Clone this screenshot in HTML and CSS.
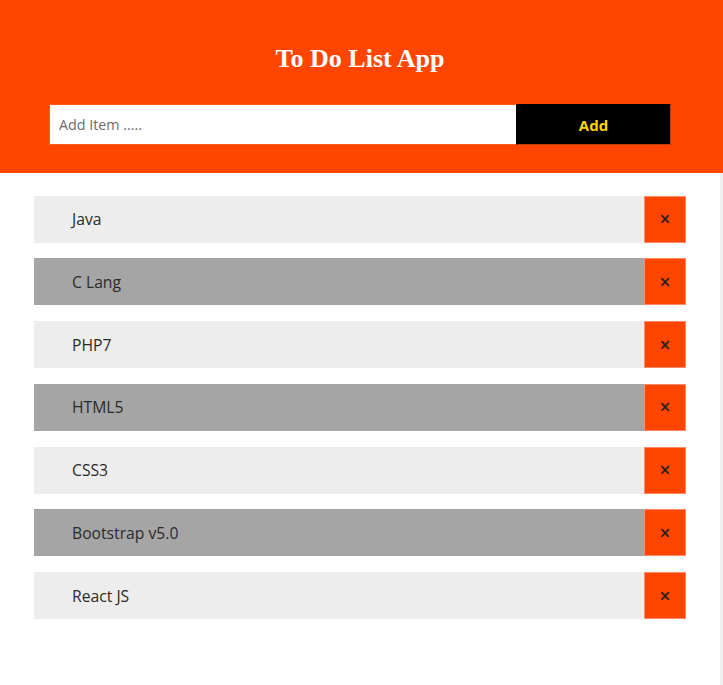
FILE: index.html
```html
<!DOCTYPE html>
<html>
<head>
<meta charset="utf-8">
<link rel="stylesheet" href="styles.css">
</head>
<body>
<header class="header">
  <h1 class="title">To Do List App</h1>
  <form class="add-form">
    <input class="add-input" type="text" placeholder="Add Item .....">
    <button class="add-btn" type="button">Add</button>
  </form>
</header>
<main class="list-wrap">
  <ul class="list">
    <li class="item light"><span class="item-text">Java</span><button class="del">×</button></li>
    <li class="item dark"><span class="item-text">C Lang</span><button class="del">×</button></li>
    <li class="item light"><span class="item-text">PHP7</span><button class="del">×</button></li>
    <li class="item dark"><span class="item-text">HTML5</span><button class="del">×</button></li>
    <li class="item light"><span class="item-text">CSS3</span><button class="del">×</button></li>
    <li class="item dark"><span class="item-text">Bootstrap v5.0</span><button class="del">×</button></li>
    <li class="item light"><span class="item-text">React JS</span><button class="del">×</button></li>
  </ul>
</main>
</body>
</html>
```
FILE: styles.css
```css
* { box-sizing: border-box; }
html, body { margin: 0; padding: 0; }
body {
  background: #fff;
  font-family: "Open Sans", "Noto Sans", sans-serif;
  height: 685px;
  overflow: hidden;
}
.header {
  background: #ff4500;
  height: 173px;
  padding: 44px 0 0 49px;
  display: flex;
  flex-direction: column;
}
.title {
  margin: 0;
  width: 622px;
  text-align: center;
  font-family: "Liberation Serif", "Times New Roman", serif;
  font-weight: bold;
  font-size: 26px;
  line-height: 30px;
  color: #fff;
}
.add-form {
  margin-top: 30px;
  display: flex;
  width: 622px;
  height: 41px;
}
.add-input {
  flex: 0 0 467px;
  height: 41px;
  border: 1px solid #ff5a1f;
  border-right: none;
  background: #fff;
  padding: 0 9px;
  font-family: "Open Sans", "Noto Sans", sans-serif;
  font-size: 14.3px;
  color: #333;
  outline: none;
}
.add-input::placeholder { color: #6c6c6c; }
.add-btn {
  flex: 0 0 155px;
  height: 41px;
  background: #000;
  border: 1px solid #000;
  border-right-color: #c23a10;
  border-bottom-color: #c23a10;
  color: #ffd400;
  font-family: "Open Sans", "Noto Sans", sans-serif;
  font-weight: bold;
  font-size: 15px;
}
.list-wrap {
  border-right: 3px solid #f0f0f0;
  height: 512px;
  padding: 22.5px 34px 0 34px;
}
.list {
  list-style: none;
  margin: 0;
  padding: 0;
  display: flex;
  flex-direction: column;
  gap: 15.8px;
  width: 652px;
}
.item {
  display: flex;
  height: 47px;
}
.item.light { background: #ededed; }
.item.dark { background: #a5a5a5; }
.item-text {
  flex: 1;
  padding-left: 38px;
  display: flex;
  align-items: center;
  font-size: 15.7px;
  color: #2a2a2a;
}
.del {
  flex: 0 0 42px;
  height: 47px;
  background: #ff4500;
  border: 1px solid #ff8a66;
  color: #222;
  font-size: 19px;
  font-weight: 600;
  font-family: "Open Sans", "Noto Sans", sans-serif;
  padding: 0;
  padding-top: 1px;
  line-height: 1;
}
```
